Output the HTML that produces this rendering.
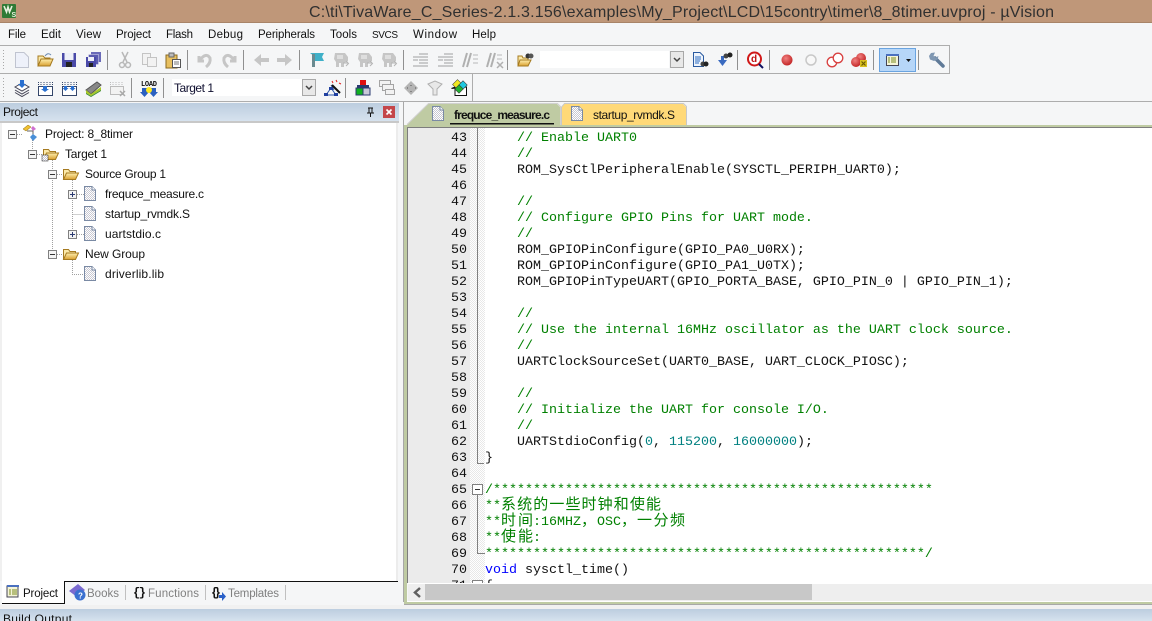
<!DOCTYPE html>
<html><head><meta charset="utf-8"><title>µVision</title>
<style>
html,body{margin:0;padding:0;background:#f5f6f7;overflow:hidden}
svg{display:block}
text{font-family:"Liberation Sans","Noto Sans CJK SC",sans-serif;font-size:12px;fill:#111}
.mn text{font-size:11.5px}
.m text,text.m{font-family:"Liberation Mono","Noto Sans CJK SC",monospace;font-size:13.333px}
.c{fill:#008000!important}
.n{fill:#008080}
.g{fill:#808080}
</style></head><body>
<svg xmlns="http://www.w3.org/2000/svg" xmlns:xlink="http://www.w3.org/1999/xlink" width="1152" height="621" viewBox="0 0 1152 621">
<defs>
<pattern id="d" width="2" height="2" patternUnits="userSpaceOnUse"><rect width="2" height="2" fill="#fff"/><rect width="1" height="1" fill="#e8e8e8"/><rect x="1" y="1" width="1" height="1" fill="#e8e8e8"/></pattern>
<pattern id="f" width="2" height="2" patternUnits="userSpaceOnUse"><rect width="2" height="2" fill="#fff"/><rect width="1" height="1" fill="#c8c8d2"/><rect x="1" y="1" width="1" height="1" fill="#c8c8d2"/></pattern>
<linearGradient id="h" x1="0" y1="0" x2="0" y2="1"><stop offset="0" stop-color="#bccddf"/><stop offset="1" stop-color="#d6e2ee"/></linearGradient>
<linearGradient id="fo" x1="0" y1="0" x2="0" y2="1"><stop offset="0" stop-color="#fff0b0"/><stop offset="1" stop-color="#d9a030"/></linearGradient>
<radialGradient id="rb" cx=".4" cy=".35" r=".7"><stop offset="0" stop-color="#f08080"/><stop offset="1" stop-color="#c02020"/></radialGradient>
<g id="file"><path d="M.5 .5H8L11.500 4V14.500H.5Z" fill="url(#f)" stroke="#7a8aa4"/><path d="M8 .5V4H11.500" fill="#fff" stroke="#7a8aa4"/></g>
<g id="folder"><path d="M.5 12.500V2.500H5.500L7 4.500H12.500V6" fill="#fbe9a8" stroke="#a57a20"/><path d="M.5 12.500L3.500 6H15.500L12.500 12.500Z" fill="url(#fo)" stroke="#a57a20"/></g>
<g id="minus"><rect x=".5" y=".5" width="8" height="8" fill="#f3f3f3" stroke="#808080"/><path d="M2 4.500H7" stroke="#333"/></g>
<g id="plus"><rect x=".5" y=".5" width="8" height="8" fill="#f3f3f3" stroke="#808080"/><path d="M2 4.500H7M4.500 2V7" stroke="#2a3a70"/></g>
<g id="gflag"><path d="M-6 -7H4L7 -3V1L3 3V7H0V3H-2V7H-5V2L-7 -1Z" fill="#c6c6c6"/><path d="M-4 -5H2V-1H-4Z" fill="#dedede"/><path d="M2 3H7M5 1L7.500 3.500L5 6" fill="none" stroke="#b4b4b4"/></g>
</defs>

<!-- window chrome -->
<rect width="1152" height="621" fill="#f5f6f7"/>
<rect width="1152" height="22" fill="#bf9779"/>
<rect y="22" width="1152" height="1" fill="#a88468"/>
<rect x="2" y="4" width="14" height="14" rx="1" fill="#2f7a35"/>
<path d="M4 6L6.500 12L8 7L9.500 12L12 6" fill="none" stroke="#e8f2e0" stroke-width="1.600"/>
<text x="11.500" y="17" style="font-size:7px;font-weight:bold;fill:#e8f2e0">S</text>
<text x="309" y="17" textLength="745" lengthAdjust="spacing" style="font-size:16px;fill:#303030">C:\ti\TivaWare_C_Series-2.1.3.156\examples\My_Project\LCD\15contry\timer\8_8timer.uvproj - µVision</text>

<!-- menu -->
<g class="mn">
<text x="8" y="38" textLength="18">File</text>
<text x="41" y="38" textLength="20">Edit</text>
<text x="76" y="38" textLength="25">View</text>
<text x="116" y="38" textLength="35">Project</text>
<text x="166" y="38" textLength="27">Flash</text>
<text x="208" y="38" textLength="35">Debug</text>
<text x="258" y="38" textLength="57">Peripherals</text>
<text x="330" y="38" textLength="27">Tools</text>
<text x="372" y="38" textLength="26" style="font-size:10px">SVCS</text>
<text x="413" y="38" textLength="44">Window</text>
<text x="472" y="38" textLength="24">Help</text>
</g>
<rect y="45" width="950" height="1" fill="#adadad"/>
<rect x="949" y="45" width="1" height="29" fill="#adadad"/>
<rect y="73" width="950" height="1" fill="#adadad"/>
<rect x="472" y="73" width="1" height="29" fill="#adadad"/>
<rect y="101" width="1152" height="1" fill="#adadad"/>

<!-- grips -->
<path d="M3.500 50V71M3.500 78V99" stroke="#a8a8a8" stroke-dasharray="1 2"/>
<!-- separators -->
<g fill="#909090">
<rect x="107" y="50" width="1" height="20"/><rect x="187" y="50" width="1" height="20"/><rect x="243" y="50" width="1" height="20"/><rect x="299" y="50" width="1" height="20"/><rect x="403" y="50" width="1" height="20"/><rect x="507" y="50" width="1" height="20"/><rect x="737" y="50" width="1" height="20"/><rect x="769" y="50" width="1" height="20"/><rect x="873" y="50" width="1" height="20"/><rect x="918" y="50" width="1" height="20"/>
<rect x="131" y="78" width="1" height="20"/><rect x="163" y="78" width="1" height="20"/><rect x="345" y="78" width="1" height="20"/>
</g>

<!-- toolbar 1 icons -->
<path d="M15.500 52.500H24L28.500 57V67.500H15.500Z" fill="#eef1fa" stroke="#c0c4d0"/>
<g transform="translate(37,53)"><path d="M1 13V3H6L8 5H13V6" fill="#fbe9a8" stroke="#a57a20"/><path d="M1 13L4 6H16L13 13Z" fill="url(#fo)" stroke="#a57a20"/><path d="M8 3Q11 -1 14 2" fill="none" stroke="#6a8ab0"/></g>
<g transform="translate(62,53)"><rect width="14" height="14" fill="#4a4aa8"/><rect x="2.500" y="0" width="9" height="7" fill="#eef0f8"/><rect x="4" y="9" width="6" height="5" fill="#222"/></g>
<g transform="translate(86,52)"><rect x="5" width="10" height="10" fill="#6a6ab8"/><rect x="2.500" y="2.500" width="10" height="10" fill="#5a5ab0" stroke="#dfe0f0" stroke-width=".5"/><rect y="5" width="10" height="10" fill="#4a4aa8"/><rect x="2" y="5" width="6" height="4" fill="#eef0f8"/><rect x="3" y="11" width="4" height="4" fill="#222"/></g>
<g fill="none" stroke="#b8b8b8" stroke-width="1.500"><path d="M122 52L127 62M128 52L123 62"/><circle cx="122" cy="65" r="2.500"/><circle cx="128" cy="65" r="2.500"/></g>
<g fill="#f2f2f2" stroke="#c4c4c4"><path d="M142.500 53.500H150.500V64.500H142.500Z"/><path d="M147.500 57.500H156.500V66.500H147.500Z"/></g>
<g transform="translate(165,52)"><rect x="1" y="3" width="11" height="13" fill="#e8c060" stroke="#8a6a20"/><rect x="4" y="1" width="5" height="4" fill="#bbb" stroke="#666"/><rect x="7.500" y="7.500" width="8" height="8" fill="#fff" stroke="#555"/><path d="M9 10H14M9 12H14" stroke="#777"/></g>
<g fill="none" stroke="#c6c6c6" stroke-width="3"><path d="M199 56L199 61H204M200 60Q206 52 210 58Q211 63 206 67"/><path d="M235 56L235 61H230M234 60Q228 52 224 58Q223 63 228 67"/></g>
<path d="M254 60L261 54V58H269V62H261V66Z" fill="#c6c6c6"/><path d="M292 60L285 54V58H277V62H285V66Z" fill="#c6c6c6"/>
<g transform="translate(310,53)"><path d="M0 0H14L12 4L14 8H4V3Z" fill="#3fb0c8"/><rect x="2" y="1" width="3" height="13" fill="#6a8a90"/></g>
<use xlink:href="#gflag" x="341" y="60"/><use xlink:href="#gflag" x="365" y="60"/><use xlink:href="#gflag" x="389" y="60"/>
<path d="M413 57H428M419 60H428M419 63H428M419 54H428M413 66H428M413 60H418" stroke="#a0a0a0" fill="none"/>
<path d="M438 57H453M444 60H453M444 63H453M444 54H453M438 66H453M438 60H443" stroke="#a0a0a0" fill="none"/>
<path d="M463 67L467 53M467 67L471 53" stroke="#b0b0b0" stroke-width="2"/><path d="M473 55H478M473 59H478M473 63H478" stroke="#b8b8b8"/>
<path d="M487 67L491 53M491 67L495 53" stroke="#b0b0b0" stroke-width="2"/><path d="M497 55H502M497 59H502" stroke="#b8b8b8"/><path d="M497 62L503 68M503 62L497 68" stroke="#b0b0b0" stroke-width="1.500"/>
<g transform="translate(517,52)"><path d="M1 14V4H5L6 6H11V14Z" fill="#fbe9a8" stroke="#a57a20"/><path d="M1 14L3 8H14L11 14Z" fill="url(#fo)" stroke="#a57a20"/><circle cx="11" cy="4" r="2.500" fill="#333"/><circle cx="14" cy="4" r="2.500" fill="#555"/></g>

<!-- combo 1 -->
<rect x="540" y="51" width="129" height="17" fill="#fff"/>
<rect x="670.500" y="51.500" width="13" height="16" fill="#e8e8e8" stroke="#a8a8a8"/>
<path d="M674 58L677 61L680 58" fill="none" stroke="#444" stroke-width="1.500"/>

<g transform="translate(693,52)"><path d="M.5 .5H7L10.500 4V14.500H.5Z" fill="#eef4fc" stroke="#2a5aa0"/><path d="M2 5H8M2 7H8M2 9H7M2 11H6" stroke="#2a6ac0"/><circle cx="10" cy="12" r="2.500" fill="#444"/><circle cx="13" cy="12" r="2.500" fill="#222"/></g>
<g transform="translate(716,52)"><path d="M2 8H5V4H8V8H11L6.500 14Z" fill="#3a6ac0"/><circle cx="10" cy="4" r="2.500" fill="#444"/><circle cx="14" cy="3" r="2.500" fill="#222"/></g>
<g transform="translate(747,51)"><circle cx="7.500" cy="8" r="6.500" fill="#fff" stroke="#d01818" stroke-width="2"/><text x="4" y="11" style="font-size:10px;font-weight:bold;fill:#c01010">d</text><path d="M12 13L16 17" stroke="#101060" stroke-width="2"/></g>

<circle cx="787" cy="60" r="5.500" fill="url(#rb)"/>
<circle cx="811" cy="60" r="5" fill="#f8f8f8" stroke="#c8c8c8" stroke-width="1.500"/>
<circle cx="832" cy="62" r="4.800" fill="#fff" stroke="#d84040" stroke-width="1.300"/><circle cx="838" cy="58" r="4.800" fill="#fff" stroke="#d84040" stroke-width="1.300"/>
<circle cx="861" cy="58" r="5" fill="url(#rb)"/><circle cx="856" cy="62" r="5" fill="url(#rb)"/><rect x="860" y="60" width="7" height="7" fill="#d8c020"/><path d="M861.500 61.500L865.500 65.500M865.500 61.500L861.500 65.500" stroke="#6a5a00" stroke-width="1.200"/>

<rect x="879.500" y="48.500" width="36" height="23" fill="#b6d6f8" stroke="#6aa4e0"/>
<rect x="886.500" y="54.500" width="12" height="11" fill="#f4f4d8" stroke="#445"/><rect x="886" y="54" width="13" height="2" fill="#4a70c0"/><path d="M888 58H890M888 60H890M888 62H890M891 58H896M891 60H896M891 62H896" stroke="#7a8a20"/>
<path d="M906 59H911L908.500 62Z" fill="#111"/>
<!-- wrench -->
<path d="M935 58L943 66" stroke="#5f7a98" stroke-width="3.500" stroke-linecap="round" fill="none"/>
<path d="M935 52.500L931 53L929 56L930 59.500L934 61L937.500 59.500L938.500 56L935.500 57.500L933.500 56Z" fill="#7f97b2"/>

<!-- toolbar 2 icons -->
<g transform="translate(14,80)"><path d="M1 7L8 3L15 7L8 11Z" fill="#fff" stroke="#445"/><path d="M1 10L8 14L15 10M1 12.500L8 16.500L15 12.500" fill="none" stroke="#445"/><path d="M6 0H10V4H12L8 8L4 4H6Z" fill="#2a70d0"/></g>
<g transform="translate(38,80)"><path d="M.5 6.500H14.500V15.500H.5Z" fill="#fff" stroke="#34466a"/><path d="M.5 2V5M3 2V5M6 2V5M9 2V5M12 2V5M14.500 2V5" stroke="#34466a" stroke-dasharray="1 1"/><path d="M5 6H9V9H11L7 12L3 9H5Z" fill="#2a70d0"/></g>
<g transform="translate(62,80)"><path d="M.5 6.500H14.500V15.500H.5Z" fill="#fff" stroke="#34466a"/><path d="M.5 2V5M3 2V5M6 2V5M9 2V5M12 2V5M14.500 2V5" stroke="#34466a" stroke-dasharray="1 1"/><path d="M2 6H5V8H6.500L3.500 11L.5 8H2ZM9 6H12V8H13.500L10.500 11L7.500 8H9Z" fill="#2a70d0"/></g>
<g transform="translate(86,80)"><path d="M0 10L11 2L15 5L5 14Z" fill="#888" stroke="#555"/><path d="M0 10L5 14L15 7V10L5 16L0 13Z" fill="#a8c828"/><path d="M0 13L5 16L15 10V11L5 17L0 14Z" fill="#3a8a30"/></g>
<g transform="translate(110,80)"><path d="M.5 6.500H13.500V14.500H.5Z" fill="#f2f2f2" stroke="#bbb"/><path d="M.5 2V5M3 2V5M6 2V5M9 2V5M12 2V5" stroke="#bbb" stroke-dasharray="1 1"/><path d="M10 11L15 16M15 11L10 16" stroke="#aaa" stroke-width="1.500"/></g>
<text x="141" y="86" textLength="16" style="font-family:'Liberation Mono',monospace;font-size:7px;font-weight:bold">LOAD</text>
<path d="M142 88H147V92H149L144.500 97L140 92H142ZM151 88H156V92H158L153.500 97L149 92H151Z" fill="#2a60c0"/>
<circle cx="149" cy="90" r="3" fill="#ffe820"/>

<rect x="172" y="79" width="130" height="17" fill="#fff"/>
<text x="174" y="92" textLength="40" style="fill:#101030">Target 1</text>
<rect x="302.500" y="79.500" width="13" height="16" fill="#e8e8e8" stroke="#a8a8a8"/>
<path d="M306 86L309 89L312 86" fill="none" stroke="#444" stroke-width="1.500"/>

<g transform="translate(323,79)"><path d="M8 6L11 11" stroke="#3058a8"/><path d="M3 16L8 9L13 16Z" fill="none" stroke="#3058a8"/><rect x="6" y="8" width="4" height="3" fill="#2040a0"/><rect x="1" y="14" width="4" height="3" fill="#2040a0"/><rect x="11" y="14" width="4" height="3" fill="#2040a0"/><path d="M9 6L17 14" stroke="#111" stroke-width="2"/><path d="M9 2L10 4M13 1L14 3M16 4L18 5" stroke="#e02020"/></g>
<g transform="translate(355,80)"><rect x="5" y="0" width="6" height="6" fill="#e01010"/><rect x="2" y="5" width="12" height="3" fill="#2a3a70"/><rect x="1" y="8" width="7" height="7" fill="#10b020" stroke="#2a3a70"/><rect x="8" y="8" width="7" height="7" fill="#c8c8d8" stroke="#2a3a70"/></g>
<g fill="#f2f2f2" stroke="#a4a4a4"><rect x="379.500" y="80.500" width="11" height="6"/><rect x="382.500" y="84.500" width="11" height="6"/><rect x="385.500" y="89.500" width="9" height="5"/></g>
<path d="M411 81L418 88L411 95L404 88Z" fill="#b4b4b4"/><path d="M411 85V85.500M407 88H407.500M415 88H415.500M411 91V91.500" stroke="#555" stroke-width="2"/>
<path d="M428 84L435 81L442 84L437 89V95H433V89Z" fill="#e8e8e8" stroke="#b0b0b0"/>
<g transform="translate(451,79)"><path d="M.5 9.500L4 8V16.500H15.500V8Z" fill="#fff" stroke="#111"/><rect x="3" y="2" width="7" height="7" transform="rotate(45 6.500 5.500)" fill="#f0e820" stroke="#333" stroke-width=".5"/><rect x="9" y="3" width="6" height="6" transform="rotate(45 12 6)" fill="#20c8e0" stroke="#333" stroke-width=".5"/><rect x="5" y="7" width="6" height="6" transform="rotate(45 8 10)" fill="#20b030" stroke="#333" stroke-width=".5"/></g>

<!-- project panel -->
<rect x="0" y="103" width="399" height="18" fill="url(#h)"/>
<text x="3" y="116" textLength="35">Project</text>
<path d="M368 108H373M369 108V113H372V108M367 113H374M370.500 113V117" fill="none" stroke="#111"/>
<rect x="383" y="106" width="12" height="12" fill="#c4464a"/>
<path d="M386.500 109.500L391.500 114.500M391.500 109.500L386.500 114.500" stroke="#fff" stroke-width="1.600"/>
<rect x="0" y="121" width="399" height="2" fill="#c8c8c8"/>
<rect x="2" y="123" width="394" height="458" fill="#fff"/>
<rect x="396" y="123" width="2" height="458" fill="#ececec"/>
<rect x="0" y="123" width="2" height="458" fill="#f0f0f0"/>
<rect x="64" y="581" width="334" height="1" fill="#111"/>

<!-- tree lines -->
<g stroke="#a0a0a0" stroke-dasharray="1 1" fill="none">
<path d="M17 134.500H23M32.500 140V150M37 154.500H43M52.500 160V250M57 174.500H63M57 254.500H63M72.500 180V190M72.500 198V230M77 194.500H84M72.500 214.500H84M77 234.500H84M72.500 260V274.500H84"/>
</g>
<use xlink:href="#minus" x="8" y="130"/>
<use xlink:href="#minus" x="28" y="150"/>
<use xlink:href="#minus" x="48" y="170"/>
<use xlink:href="#minus" x="48" y="250"/>
<use xlink:href="#plus" x="68" y="190"/>
<use xlink:href="#plus" x="68" y="230"/>
<!-- project icon -->
<g transform="translate(22,125)"><path d="M1 4L6 0L9 2L4 6Z" fill="#f0c030" stroke="#8a6a10" stroke-width=".5"/><path d="M11 1L14 4L11 6L9 3Z" fill="#d070d0"/><path d="M5 6H11V16" fill="none" stroke="#666"/><path d="M11 9L15 12L11 16L8 12Z" fill="#4a90d8"/></g>
<!-- target folder -->
<use xlink:href="#folder" x="43" y="147"/>
<rect x="42" y="155" width="6" height="6" fill="url(#f)" stroke="#222" stroke-width=".5"/>
<use xlink:href="#folder" x="63" y="167"/>
<use xlink:href="#folder" x="63" y="247"/>
<use xlink:href="#file" x="84" y="186"/>
<use xlink:href="#file" x="84" y="206"/>
<use xlink:href="#file" x="84" y="226"/>
<use xlink:href="#file" x="84" y="266"/>
<text x="45" y="138" textLength="88">Project: 8_8timer</text>
<text x="65" y="158" textLength="42">Target 1</text>
<text x="85" y="178" textLength="81">Source Group 1</text>
<text x="105" y="198" textLength="99">frequce_measure.c</text>
<text x="105" y="218" textLength="85">startup_rvmdk.S</text>
<text x="105" y="238" textLength="56">uartstdio.c</text>
<text x="85" y="258" textLength="60">New Group</text>
<text x="105" y="278" textLength="59">driverlib.lib</text>

<!-- bottom tabs -->
<path d="M2 581H64V603H2Z" fill="#fff"/>
<path d="M2 603.500H64.500V581" fill="none" stroke="#111"/>
<rect x="7" y="586" width="11" height="11" fill="#f4f4d8" stroke="#445" stroke-width="1"/><rect x="7" y="585" width="12" height="2" fill="#4a70c0"/><path d="M9 590H11M9 592H11M9 594H11M12 590H17M12 592H17M12 594H17" stroke="#7a8a20"/>
<g class="mn">
<text x="23" y="597" textLength="35">Project</text>
<text x="87" y="597" textLength="32" class="g">Books</text>
<text x="148" y="597" textLength="51" class="g">Functions</text>
<text x="228" y="597" textLength="51" class="g">Templates</text>
</g>
<g transform="translate(69,584)"><path d="M0 7L9 0L16 6L8 13Z" fill="#7a6ad0"/><circle cx="11" cy="11" r="5.500" fill="#3a70d0"/><text x="9" y="14.500" style="font-size:8px;font-weight:bold;fill:#fff">?</text></g>
<rect x="125" y="585" width="1" height="15" fill="#c0c0c0"/>
<text x="133" y="596" textLength="13" style="font-weight:bold;font-family:'Liberation Mono',monospace;font-size:12px">{}</text>
<rect x="205" y="585" width="1" height="15" fill="#c0c0c0"/>
<text x="211" y="596" textLength="10" style="font-weight:bold;font-family:'Liberation Mono',monospace;font-size:12px">{}</text>
<path d="M219 595H222V592L226 596.500L222 601V598H219Z" fill="#2a60c8"/>
<rect x="285" y="585" width="1" height="15" fill="#c0c0c0"/>

<!-- tab strip -->
<rect x="403" y="102" width="1" height="500" fill="#a8a8a8"/>
<path d="M407 125L428 104H557L560 107V125Z" fill="#bfcba3"/>
<path d="M407 124.500L428.500 103.500H557.500L560.500 106.500V125" fill="none" stroke="#d0d0d0"/>
<path d="M561 125V108L564.500 104H683L686 107V125Z" fill="#ffd978"/>
<path d="M561.500 125V107L564.500 103.500H683.500L686.500 106.500V125" fill="none" stroke="#c8c8c8"/>
<use xlink:href="#file" x="432" y="106"/>
<use xlink:href="#file" x="571" y="106"/>
<text x="454" y="119" textLength="96" style="font-weight:bold">frequce_measure.c</text>
<rect x="450" y="123" width="104" height="1.500" fill="#111"/>
<text x="593" y="119" textLength="82">startup_rvmdk.S</text>

<!-- editor frame -->
<rect x="404" y="125" width="748" height="3" fill="#bfcba3"/>
<rect x="404" y="125" width="3" height="477" fill="#bfcba3"/>
<rect x="407" y="127" width="745" height="1" fill="#7d7d7d"/>
<rect x="407" y="127" width="1" height="456" fill="#7d7d7d"/>
<rect x="408" y="128" width="744" height="456" fill="#fff"/>
<rect x="408" y="128" width="62" height="456" fill="#ebebeb"/>
<rect x="470" y="128" width="15" height="456" fill="url(#d)"/>

<!-- fold marks -->
<path d="M477.500 128V463.500H484" fill="none" stroke="#808080"/>
<path d="M477.500 494V553.500H485" fill="none" stroke="#808080"/>
<rect x="472.500" y="484.500" width="10" height="10" fill="#fff" stroke="#808080"/><path d="M475 489.500H480" stroke="#333"/>
<rect x="472.500" y="580.500" width="10" height="10" fill="#fff" stroke="#808080"/>

<!-- line numbers -->
<g class="m" text-anchor="end">
<text x="467" y="141">43</text><text x="467" y="157">44</text><text x="467" y="173">45</text><text x="467" y="189">46</text><text x="467" y="205">47</text><text x="467" y="221">48</text><text x="467" y="237">49</text><text x="467" y="253">50</text><text x="467" y="269">51</text><text x="467" y="285">52</text><text x="467" y="301">53</text><text x="467" y="317">54</text><text x="467" y="333">55</text><text x="467" y="349">56</text><text x="467" y="365">57</text><text x="467" y="381">58</text><text x="467" y="397">59</text><text x="467" y="413">60</text><text x="467" y="429">61</text><text x="467" y="445">62</text><text x="467" y="461">63</text><text x="467" y="477">64</text><text x="467" y="493">65</text><text x="467" y="509">66</text><text x="467" y="525">67</text><text x="467" y="541">68</text><text x="467" y="557">69</text><text x="467" y="573">70</text><text x="467" y="589">71</text>
</g>

<!-- code -->
<g class="m">
<text x="517" y="141" class="c">// Enable UART0</text>
<text x="517" y="157" class="c">//</text>
<text x="517" y="173">ROM_SysCtlPeripheralEnable(SYSCTL_PERIPH_UART0);</text>
<text x="517" y="205" class="c">//</text>
<text x="517" y="221" class="c">// Configure GPIO Pins for UART mode.</text>
<text x="517" y="237" class="c">//</text>
<text x="517" y="253">ROM_GPIOPinConfigure(GPIO_PA0_U0RX);</text>
<text x="517" y="269">ROM_GPIOPinConfigure(GPIO_PA1_U0TX);</text>
<text x="517" y="285">ROM_GPIOPinTypeUART(GPIO_PORTA_BASE, GPIO_PIN_0 | GPIO_PIN_1);</text>
<text x="517" y="317" class="c">//</text>
<text x="517" y="333" class="c">// Use the internal 16MHz oscillator as the UART clock source.</text>
<text x="517" y="349" class="c">//</text>
<text x="517" y="365">UARTClockSourceSet(UART0_BASE, UART_CLOCK_PIOSC);</text>
<text x="517" y="397" class="c">//</text>
<text x="517" y="413" class="c">// Initialize the UART for console I/O.</text>
<text x="517" y="429" class="c">//</text>
<text x="517" y="445">UARTStdioConfig(<tspan class="n">0</tspan>, <tspan class="n">115200</tspan>, <tspan class="n">16000000</tspan>);</text>
<text x="485" y="461">}</text>
<text x="485" y="493" class="c">/*******************************************************</text>
<text x="485" y="509" class="c">**</text>
<text x="501" y="509" class="c" textLength="160" style="font-size:15px">系统的一些时钟和使能</text>
<text x="485" y="525" class="c">**</text>
<text x="501" y="525" class="c" textLength="32" style="font-size:15px">时间</text>
<text x="533" y="525" class="c">:16MHZ</text>
<text x="581" y="525" class="c" style="font-size:15px">，</text>
<text x="597" y="525" class="c">OSC</text>
<text x="621" y="525" class="c" style="font-size:15px">，</text>
<text x="637" y="525" class="c" textLength="48" style="font-size:15px">一分频</text>
<text x="485" y="541" class="c">**</text>
<text x="501" y="541" class="c" textLength="32" style="font-size:15px">使能</text>
<text x="533" y="541" class="c">:</text>
<text x="485" y="557" class="c">*******************************************************/</text>
<text x="485" y="573"><tspan fill="#0000ff">void</tspan> sysctl_time()</text>
<text x="485" y="589">{</text>
</g>

<!-- horizontal scrollbar -->
<rect x="408" y="583" width="744" height="1" fill="#fff"/>
<rect x="408" y="584" width="744" height="17" fill="#eeeeee"/>
<rect x="425" y="584" width="387" height="16" fill="#c8c8c8"/>
<path d="M420 588L415 592.500L420 597" fill="none" stroke="#606060" stroke-width="2.500"/>
<rect x="407" y="601" width="745" height="1" fill="#fff"/>
<rect x="404" y="602" width="748" height="2" fill="#bfcba3"/>
<rect x="404" y="604" width="748" height="1" fill="#a8a8a8"/>
<rect x="0" y="605" width="1152" height="4" fill="#f1f1f1"/>

<!-- build output -->
<rect x="0" y="609" width="1152" height="12" fill="url(#h)"/>
<text x="3" y="623" textLength="69">Build Output</text>
</svg>
</body></html>
